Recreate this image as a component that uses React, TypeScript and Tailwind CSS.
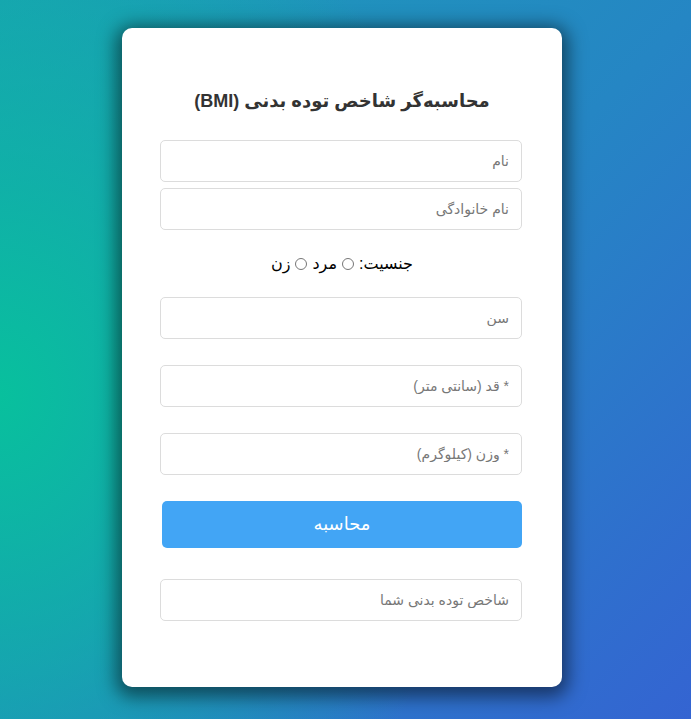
import React from 'react'

const fieldClass =
  'block w-[362px] h-[42px] rounded-[5px] border border-[#dcdcdc] bg-white px-3 text-[14px] text-[#333] placeholder:text-[#777] outline-none'

function Field({ placeholder }: { placeholder: string }) {
  return <input type="text" placeholder={placeholder} className={fieldClass} />
}

export default function App() {
  return (
    <div
      dir="rtl"
      className="min-h-[719px] w-full flex justify-center pr-[7px] pt-[28px] pb-[32px] bg-[radial-gradient(ellipse_70%_80%_at_0%_55%,rgba(8,192,157,1)_0%,rgba(8,192,157,0)_100%),linear-gradient(135deg,#1b9cb6_0%,#2586c4_50%,#3464d2_100%)] font-['Liberation_Sans','DejaVu_Sans',Arial,sans-serif]"
    >
      <div className="w-[440px] h-[659px] rounded-[10px] bg-white px-[40px] pt-[61px] shadow-[0_4px_18px_6px_rgba(0,0,0,0.5)]">
        {/* عنوان */}
        <h1 className="text-center text-[18px] font-bold text-[#333] leading-6">
          محاسبه‌گر شاخص توده بدنی (BMI)
        </h1>

        <div className="mt-[27px] flex flex-col gap-[6px]">
          <Field placeholder="نام" />
          <Field placeholder="نام خانوادگی" />
        </div>

        {/* جنسیت */}
        <div className="mt-[23px] flex items-center justify-center gap-[5px] text-[16px] text-black h-[22px]">
          <span>جنسیت:</span>
          <label className="flex items-center gap-[5px]">
            <input type="radio" name="gender" className="m-0 size-[12px]" />
            <span>مرد</span>
          </label>
          <label className="flex items-center gap-[5px]">
            <input type="radio" name="gender" className="m-0 size-[12px]" />
            <span>زن</span>
          </label>
        </div>

        <div className="mt-[22px] flex flex-col gap-[26px]">
          <Field placeholder="سن" />
          <Field placeholder="* قد (سانتی متر)" />
          <Field placeholder="* وزن (کیلوگرم)" />
        </div>

        <button className="mt-[26px] block w-[360px] h-[47px] rounded-[5px] bg-[#42a5f5] text-white text-[18px]">
          محاسبه
        </button>

        <div className="mt-[31px]">
          <Field placeholder="شاخص توده بدنی شما" />
        </div>
      </div>
    </div>
  )
}
